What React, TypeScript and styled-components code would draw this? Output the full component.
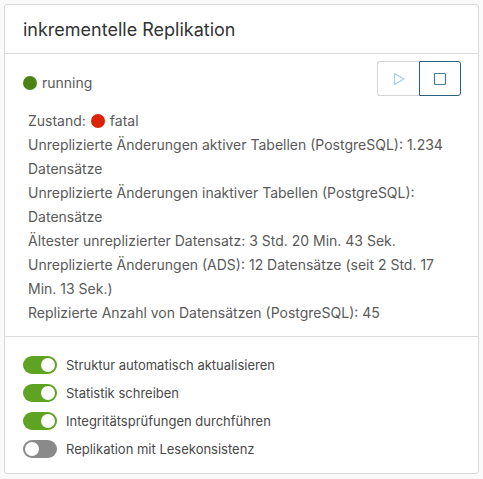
import React from "react";
import styled, { createGlobalStyle } from "styled-components";

const Global = createGlobalStyle`
  html, body { margin: 0; padding: 0; background: #fafafa; }
  body { font-family: Inter, "Open Sans", sans-serif; }
  * { box-sizing: border-box; }
`;

const Page = styled.div`
  padding: 4px;
`;

const Card = styled.section`
  width: 475px;
  height: 470px;
  background: #fff;
  border: 1px solid #d8d8d8;
  border-radius: 3px;
  display: flex;
  flex-direction: column;
`;

const Header = styled.header`
  height: 49px;
  padding: 0 18px;
  display: flex;
  align-items: center;
  border-bottom: 1px solid #dcdcdc;
  font-size: 18px;
  color: #333;
`;

const Body = styled.div`
  padding: 7px 17px 11px 18px;
  border-bottom: 1px solid #dcdcdc;
`;

const TopRow = styled.div`
  display: flex;
  justify-content: space-between;
  align-items: flex-start;
`;

const Status = styled.div`
  display: flex;
  align-items: center;
  gap: 5px;
  margin-top: 13px;
  font-size: 14px;
  color: #5a5a5a;
`;

const Dot = styled.span<{ $color: string }>`
  display: inline-block;
  width: 14px;
  height: 14px;
  border-radius: 50%;
  background: ${(p) => p.$color};
  flex: none;
`;

const BtnGroup = styled.div`
  display: flex;
`;

const IconBtn = styled.button<{ $active?: boolean; $first?: boolean }>`
  width: 42px;
  height: 35px;
  display: flex;
  align-items: center;
  justify-content: center;
  background: #fff;
  padding: 0;
  border: 1px solid ${(p) => (p.$active ? "#2a5f7e" : "#d4d4d4")};
  border-radius: ${(p) => (p.$first ? "3px 0 0 3px" : "0 3px 3px 0")};
  ${(p) => (p.$first ? "border-right: none;" : "")}
`;

const Info = styled.div`
  margin-top: 13px;
  padding-left: 5px;
  padding-right: 8px;
  font-size: 14px;
  line-height: 24px;
  color: #5a5a5a;
`;

const InfoLine = styled.div`
  display: flex;
  align-items: center;
  gap: 5px;
`;

const Toggles = styled.div`
  padding: 19px 18px 0 18px;
  display: flex;
  flex-direction: column;
  gap: 10px;
`;

const ToggleRow = styled.label`
  display: flex;
  align-items: center;
  gap: 9px;
  font-size: 13px;
  color: #484848;
  height: 18px;
`;

const Track = styled.span<{ $on: boolean }>`
  width: 34px;
  height: 18px;
  border-radius: 9px;
  background: ${(p) => (p.$on ? "#5ea322" : "#8a8a8a")};
  position: relative;
  flex: none;
  &::after {
    content: "";
    position: absolute;
    top: 2px;
    left: ${(p) => (p.$on ? "18px" : "2px")};
    width: 14px;
    height: 14px;
    border-radius: 50%;
    background: #fff;
  }
`;

const toggles: [string, boolean][] = [
  ["Struktur automatisch aktualisieren", true],
  ["Statistik schreiben", true],
  ["Integritätsprüfungen durchführen", true],
  ["Replikation mit Lesekonsistenz", false],
];

export default function App() {
  return (
    <Page>
      <Global />
      <Card>
        <Header>inkrementelle Replikation</Header>
        <Body>
          <TopRow>
            <Status>
              <Dot $color="#4b8414" />
              running
            </Status>
            <BtnGroup>
              <IconBtn $first>
                <svg width="14" height="14" viewBox="0 0 14 14">
                  <path d="M2.5 1.5 L12 7 L2.5 12.5 Z" fill="none" stroke="#a9cde3" strokeWidth="1.2" strokeLinejoin="round" />
                </svg>
              </IconBtn>
              <IconBtn $active>
                <svg width="14" height="14" viewBox="0 0 14 14">
                  <rect x="1.5" y="1.5" width="11" height="11" rx="1" fill="none" stroke="#4a7b97" strokeWidth="1.2" />
                </svg>
              </IconBtn>
            </BtnGroup>
          </TopRow>
          <Info>
            <InfoLine>
              Zustand: <Dot $color="#dd2200" /> fatal
            </InfoLine>
            <div>Unreplizierte Änderungen aktiver Tabellen (PostgreSQL): 1.234 Datensätze</div>
            <div>Unreplizierte Änderungen inaktiver Tabellen (PostgreSQL): Datensätze</div>
            <div>Ältester unreplizierter Datensatz: 3 Std. 20 Min. 43 Sek.</div>
            <div>Unreplizierte Änderungen (ADS): 12 Datensätze (seit 2 Std. 17 Min. 13 Sek.)</div>
            <div>Replizierte Anzahl von Datensätzen (PostgreSQL): 45</div>
          </Info>
        </Body>
        <Toggles>
          {toggles.map(([label, on]) => (
            <ToggleRow key={label}>
              <Track $on={on} />
              {label}
            </ToggleRow>
          ))}
        </Toggles>
      </Card>
    </Page>
  );
}
